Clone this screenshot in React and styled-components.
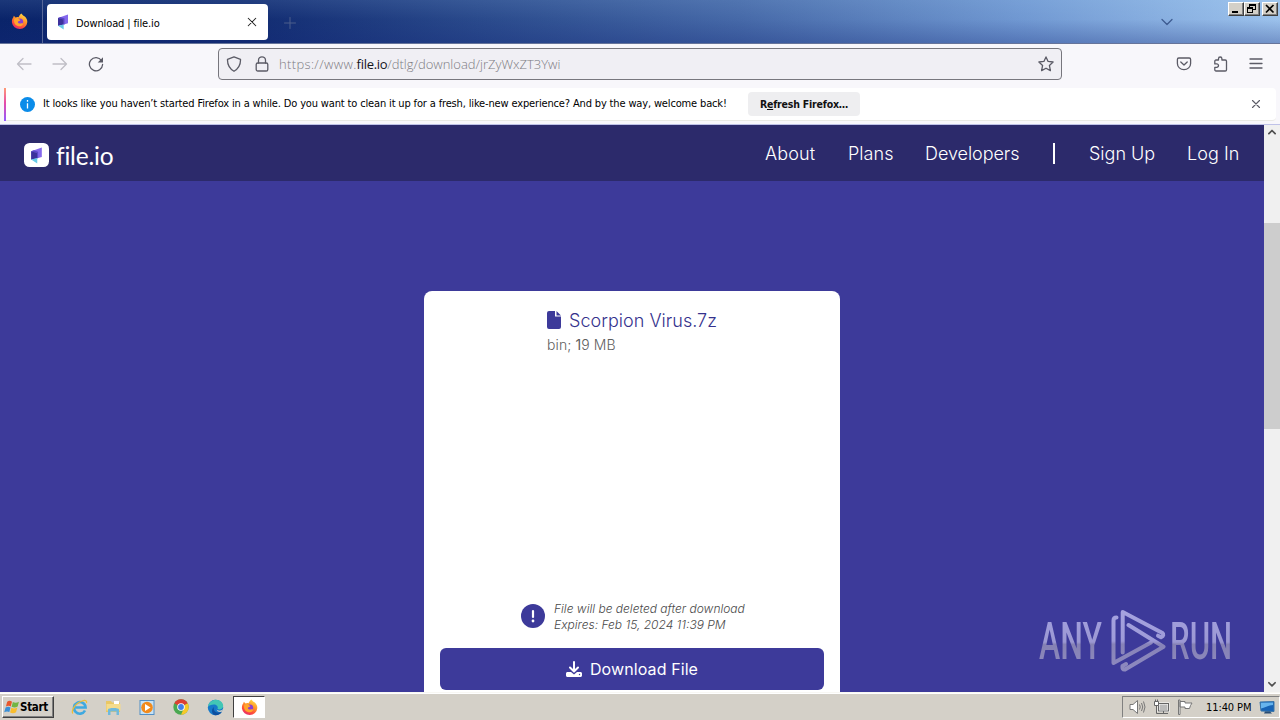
import React from "react";
import styled, { createGlobalStyle, css } from "styled-components";

const GlobalStyle = createGlobalStyle`
  * { box-sizing: border-box; }
  html, body { margin: 0; padding: 0; overflow: hidden; }
  button { font: inherit; color: inherit; border: 0; padding: 0; background: none; }
`;

const ui = css`font-family: "DejaVu Sans Condensed", "DejaVu Sans", sans-serif; font-stretch: condensed;`;

const Screen = styled.div`
  width: 1280px; height: 720px; display: flex; flex-direction: column;
  overflow: hidden; background: #f8f7fb; ${ui} font-size: 11px; color: #15141a;
`;

/* Title bar */
const TitleBar = styled.header`
  height: 44px; flex: none; display: flex; position: relative;
  background:
    linear-gradient(180deg, rgba(180,225,255,.1), rgba(60,90,160,0) 45%, rgba(20,40,120,.3) 100%),
    linear-gradient(90deg, #0a246a 0, #122c72 250px, #2a4a8c 480px, #4669a8 740px, #7098d2 1020px, #9cc2ec 1280px);
  border-bottom: 1px solid #66749a;
`;
const FirefoxView = styled.div`
  width: 43px; display: flex; align-items: center; justify-content: center;
  border-right: 1px solid #576798; padding-right: 3px;
`;
const Tab = styled.div`
  width: 221px; height: 36px; margin: 4px 0 0 4px; border-radius: 4px; background: #fff;
  display: flex; align-items: center; padding: 0 10px 0 9px;
`;
const TabTitle = styled.span`flex: 1; margin-left: 6px; padding-top: 2px; letter-spacing: ${p => p.$ls}px; color: #000; white-space: nowrap;`;
const NewTab = styled.button`margin: 2px 0 0 16px; display: flex; align-items: center;`;
const TabList = styled.button`margin: 0 105px 0 auto; display: flex; align-items: center;`;
const WindowButtons = styled.div`position: absolute; right: 2px; top: 2px; display: flex;`;
const WindowButton = styled.button`
  width: 16px; height: 14px; background: #d4d0c8; display: flex;
  margin-left: ${p => p.$gap || 0}px;
  border: 1px solid; border-color: #fff #404040 #404040 #fff; box-shadow: inset -1px -1px #808080;
`;

/* Navigation bar */
const NavBar = styled.div`
  height: 44px; flex: none; background: #f8f7fb; display: flex; align-items: center; padding: 0 16px 4px;
`;
const NavButtons = styled.div`display: flex; gap: 20px; width: 202px;`;
const UrlBar = styled.div`
  width: 844px; height: 32px; border: 1px solid #77767d; border-radius: 4px; background: #f0eff4;
  display: flex; align-items: center; padding: 0 7px; gap: 12px;
`;
const Url = styled.span`
  font: 300 13px "Open Sans", "Noto Sans", sans-serif; color: #7c7b82; flex: 1; margin-left: -3px;
  white-space: nowrap;
  b { font-weight: 400; color: #15141a; letter-spacing: -0.3px; }
`;
const UrlScheme = styled.span`letter-spacing: 0.35px;`;
const NavTools = styled.div`display: flex; gap: 20px; margin-left: auto;`;

/* Notification */
const Notice = styled.div`
  height: 33px; flex: none; margin: 0 4px 0 4px; background: #fff; border-radius: 0 4px 4px 0;
  border-bottom: 1px solid #e9e9e5; display: flex; align-items: center; padding-right: 13px;
`;
const NoticeAccent = styled.i`width: 2px; height: 33px; margin-right: 14px; background: linear-gradient(#ff9a75, #e64ba8 45%, #9059ff);`;
const NoticeText = styled.span`margin: 0 21px 2px 8px; width: 684px; color: #000; letter-spacing: ${p => p.$ls}px; white-space: nowrap;`;
const RefreshButton = styled.button`
  width: 112px; height: 24px; border-radius: 4px; background: #eeeef0; color: #111;
  font-weight: 700; font-size: 10.5px; letter-spacing: ${p => p.$ls}px; white-space: nowrap;
  span { text-decoration: underline; }
`;
const NoticeClose = styled.button`margin-left: auto; display: flex;`;

/* Web page */
const Viewport = styled.div`
  height: 568px; flex: none; margin-top: 3px; display: flex; border-top: 1px solid #bfc2e8;
`;
const Page = styled.main`
  width: 1264px; height: 567px; overflow: hidden; background: #3d3a9a; position: relative;
  display: flex; flex-direction: column; align-items: center;
  font-family: Inter, sans-serif; font-stretch: normal;
`;
const SiteHeader = styled.div`
  width: 100%; height: 56px; flex: none; background: #2c2a6b; display: flex; align-items: center;
  padding: 0 25px 0 24px; color: #fff;
`;
const Brand = styled.div`
  display: flex; align-items: center; gap: 7px; padding-top: 4px;
  font: 400 24.5px Lato, sans-serif; letter-spacing: ${p => p.$ls}px;
  span { height: 28px; line-height: 30px; }
`;
const SiteNav = styled.nav`margin-left: auto; display: flex; align-items: center; font-size: 18px; font-weight: 350;`;
const NavLink = styled.a`
  width: ${p => p.$w}px; margin-left: ${p => p.$gap || 0}px; letter-spacing: ${p => p.$ls}px; white-space: nowrap;
`;
const Separator = styled.i`width: 2px; height: 21px; background: #fff; margin-left: 34px;`;
const Card = styled.section`
  width: 416px; height: 440px; flex: none; margin-top: 110px; background: #fff; border-radius: 8px;
  padding: 16px 16px 0; display: flex; flex-direction: column;
`;
const FileInfo = styled.div`width: 172px; margin-left: 107px; height: 293px;`;
const FileName = styled.div`
  height: 27px; display: flex; align-items: center; gap: 8px; color: #35328d; font-size: 18px; font-weight: 350;
  letter-spacing: ${p => p.$ls}px; white-space: nowrap;
  svg { margin-bottom: 1px; }
`;
const FileMeta = styled.div`
  color: #5f5f5f; font-size: 14px; line-height: 22px; font-weight: 300; letter-spacing: ${p => p.$ls}px; white-space: nowrap;
  b { font-weight: 400; }
`;
const Expiry = styled.div`display: flex; align-items: center; gap: 8px; margin-left: 81px; height: 32px; margin-bottom: 16px;`;
const ExpiryText = styled.div`
  font-style: italic; font-size: 12px; line-height: 16px; color: #4a4a4a; font-weight: 300; white-space: nowrap;
  padding: 2px 0 0 1px;
`;
const Line = styled.p`margin: 0; letter-spacing: ${p => p.$ls}px;`;
const DownloadButton = styled.button`
  width: 384px; height: 42px; border-radius: 6px; background: #3d3a9a; color: #fff; font-size: 16px;
  display: flex; align-items: center; justify-content: center; gap: 8px; letter-spacing: ${p => p.$ls}px;
`;
const Watermark = styled.div`
  position: absolute; left: 1038px; top: 483px; width: 200px; height: 66px; display: flex; align-items: center;
`;
const WatermarkWord = styled.span`
  width: ${p => p.$w}px; height: 60px; margin-left: ${p => p.$gap || 0}px; padding-top: 1px; font: 500 52px/60px Roboto, sans-serif;
  i {
    display: inline-block; font-style: normal; transform: scaleX(${p => p.$scale}); transform-origin: 0 0;
    color: transparent; background: linear-gradient(#a09dda 20%, #9b98d2 50%, #8581b4 54%, #8b87bb 80%);
    background-clip: text; -webkit-background-clip: text;
  }
`;
const ScrollBar = styled.div`width: 16px; height: 567px; background: #f0f0f0; display: flex; flex-direction: column; justify-content: space-between;`;
const ScrollArrow = styled.div`height: 16px; display: flex; align-items: center; justify-content: center;`;
const ScrollTrack = styled.div`flex: 1; padding-top: 82px;`;
const ScrollThumb = styled.div`height: 206px; background: #cdcdcd;`;

/* Taskbar */
const TaskBar = styled.footer`
  height: 28px; flex: none; background: #d4d0c8; border-top: 1px solid #f8f7f3; display: flex; align-items: center;
  box-shadow: inset 0 1px #fff; padding: 1px 0 0 2px;
`;
const StartButton = styled.button`
  width: 52px; height: 22px; display: flex; align-items: center; padding-left: 1px; color: #000;
  border: 1px solid; border-color: #fff #404040 #404040 #fff; box-shadow: inset -1px -1px #808080;
  font: 700 11.5px "DejaVu Sans Condensed", "DejaVu Sans", sans-serif; font-stretch: condensed; letter-spacing: ${p => p.$ls}px;
`;
const Launchers = styled.div`display: flex; margin-left: 8px;`;
const Launcher = styled.div`
  width: ${p => (p.$active ? 32 : 34)}px; height: 22px; display: flex; align-items: center; justify-content: center;
  ${p => p.$active && css`background: #fff; border: 1px solid; border-color: #404040 #fff #fff #404040; margin-left: 1px;`}
`;
const Tray = styled.div`
  width: 158px; height: 22px; margin-left: auto; display: flex; align-items: center; padding-left: 6px;
  border: 1px solid; border-color: #808080 #fff #fff #808080; color: #000;
`;
const TrayIcons = styled.div`display: flex; gap: 7px; width: 77px;`;
const Clock = styled.span`width: 53px; letter-spacing: ${p => p.$ls}px; white-space: nowrap;`;

const Icon = ({ s = 16, w, h, vb = "0 0 16 16", children, c = "#5b5b66", sw = 1.3 }) => (
  <svg width={w || s} height={h || s} viewBox={vb} fill="none" stroke={c} strokeWidth={sw}
    strokeLinecap="round" strokeLinejoin="round">{children}</svg>
);

const Firefox = ({ id }) => (
  <svg width="17" height="17" viewBox="0 0 18 18">
    <defs>
      <linearGradient id={id} x1=".8" y1="0" x2=".3" y2="1">
        <stop offset="0" stopColor="#ffe34a" /><stop offset=".4" stopColor="#ff9a28" />
        <stop offset=".75" stopColor="#ff4b3b" /><stop offset="1" stopColor="#e32c70" />
      </linearGradient>
    </defs>
    <path fill={`url(#${id})`} d="M11 .5c1 1 1.2 1.8 2.8 2.8 2 1.4 3.5 3.5 3.5 6.3A8.2 8 0 0 1 1 10C.8 7.500 1.500 5.500 2.500 4.500L3 3l1.800 1.700C6 4 7 4 8 4.400 8.600 3 9.500 1.500 11 .5z" />
    <circle cx="9.300" cy="9.300" r="3.600" fill="#8a3fd1" />
    <path fill="#ffa52c" d="M3.500 6.200c2-1.500 4.500-1 5.500.8l1 .5c-.5 1.300-2 1-2.800 2 .5 1.700 2 2 3.300 1.500 1.500-.5 2.500.3 2.500.3-1 2.500-3.500 3.200-5.800 2.500C4 13 2.500 9.500 3.500 6.200z" />
  </svg>
);

const FileIoMark = ({ w, h }) => (
  <svg width={w} height={h} viewBox="0 0 12 16">
    <path fill="#8468ec" d="M1 4L11 .5v8.800L6 10.800 1 12z" />
    <path fill="#5a47c7" d="M6.500 5.600L1 4l2.500-.9 4 1.300v6l-1 .3z" />
    <path fill="#3c319c" d="M1 4l5.500 1.600v5L1 11.800z" />
    <path fill="#66c9e6" d="M1 11.700l5.700-1.300V15.500z" />
  </svg>
);

export default function App() {
  return (
    <Screen>
      <GlobalStyle />
      <TitleBar>
        <FirefoxView><Firefox id="ffview" /></FirefoxView>
        <Tab>
          <FileIoMark w={14} h={16} />
          <TabTitle $ls={-0.12}>Download | file.io</TabTitle>
          <Icon s={12} c="#222" sw={1.4}><path d="M3 3l10 10M13 3L3 13" /></Icon>
        </Tab>
        <NewTab><Icon s={12} vb="0 0 12 12" c="#4d5f8c" sw={1}><path d="M6 .5v11M.5 6h11" /></Icon></NewTab>
        <TabList><Icon c="#3e5c91"><path d="M3 5.500l5 5 5-5" /></Icon></TabList>
        <WindowButtons>
          <WindowButton><svg width="14" height="12"><path d="M3 8h6v2H3z" /></svg></WindowButton>
          <WindowButton><svg width="14" height="12" fill="none" stroke="#000" shapeRendering="crispEdges"><path d="M4.500 4V1.500h6v5H8M4 2h7M2.500 4.500h5v5h-5zM2 5h6" /></svg></WindowButton>
          <WindowButton $gap={2}><svg width="14" height="12" fill="none" stroke="#000" strokeWidth="1.700"><path d="M3 2l7.500 7.500M10.500 2L3 9.500" /></svg></WindowButton>
        </WindowButtons>
      </TitleBar>

      <NavBar>
        <NavButtons>
          <Icon c="#c0bfc6"><path d="M15 8H1.500M7 2.500L1.500 8 7 13.500" /></Icon>
          <Icon c="#c0bfc6"><path d="M1 8h13.500M9 2.500L14.500 8 9 13.500" /></Icon>
          <Icon><path d="M13.500 4.500A6.600 6.600 0 1 0 14.600 8.500" /><path fill="#5b5b66" stroke="none" d="M15 1.200v5.300H9.700z" /></Icon>
        </NavButtons>
        <UrlBar>
          <Icon><path d="M8 .8l6.500 2.500c.2 5-1.500 9-6.500 12C3 12.300 1.300 8.300 1.500 3.300z" /></Icon>
          <Icon><rect x="2.200" y="7" width="11.600" height="8" rx="1.600" /><path d="M4.500 7V4.300a3.500 3.500 0 0 1 7 0V7" /></Icon>
          <Url><UrlScheme>https://www.</UrlScheme><b>file.io</b>/dtlg/download/jrZyWxZT3Ywi</Url>
          <Icon><path d="M8 .9l2.100 4.500 5 .6-3.700 3.400 1 5.200L8 12.200l-4.400 2.400 1-5.200L.9 6l5-.6z" /></Icon>
        </UrlBar>
        <NavTools>
          <Icon><path d="M2.800 2h10.400c.8 0 1.400.6 1.400 1.400v4a6.600 6.300 0 0 1-13.200 0v-4C1.400 2.600 2 2 2.800 2zM4.800 6L8 9l3.200-3" /></Icon>
          <Icon><path d="M6.500 4V2.700a1.700 1.700 0 0 1 3.400 0V4h3.400c.7 0 1.200.5 1.200 1.200v8.600c0 .7-.5 1.200-1.200 1.200H4c-.7 0-1.200-.5-1.200-1.200v-2.500h2a1.700 1.700 0 0 0 0-3.400h-2V5.200C2.800 4.500 3.300 4 4 4z" /></Icon>
          <Icon><path d="M2 3h12M2 7.500h12M2 12h12" /></Icon>
        </NavTools>
      </NavBar>

      <Notice>
        <NoticeAccent />
        <svg width="15" height="15" viewBox="0 0 15 15">
          <circle cx="7.500" cy="7.500" r="7.500" fill="#0b8ce9" /><path d="M7.500 3v1.800M7.500 6.300v5.200" stroke="#fff" strokeWidth="1.300" />
        </svg>
        <NoticeText $ls={-0.15}>It looks like you haven’t started Firefox in a while. Do you want to clean it up for a fresh, like-new experience? And by the way, welcome back!</NoticeText>
        <RefreshButton $ls={-0.2}>R<span>e</span>fresh Firefox…</RefreshButton>
        <NoticeClose><Icon s={14}><path d="M4 4l8 8M12 4l-8 8" /></Icon></NoticeClose>
      </Notice>

      <Viewport>
        <Page>
          <SiteHeader>
            <Brand $ls={-0.2}>
              <svg width="25" height="24" viewBox="0 0 25 24">
                <rect width="25" height="24" rx="5.500" fill="#fff" />
                <g transform="translate(6 4)"><FileIoMark w={13} h={17} /></g>
              </svg>
              <span>file.io</span>
            </Brand>
            <SiteNav>
              <NavLink $w={51} $ls={0.1}>About</NavLink>
              <NavLink $w={45} $gap={32} $ls={0.05}>Plans</NavLink>
              <NavLink $w={94} $gap={32} $ls={-0.05}>Developers</NavLink>
              <Separator />
              <NavLink $w={66} $gap={34} $ls={0}>Sign Up</NavLink>
              <NavLink $w={52} $gap={32} $ls={0.05}>Log In</NavLink>
            </SiteNav>
          </SiteHeader>
          <Card>
            <FileInfo>
              <FileName $ls={0.03}>
                <svg width="14" height="18" viewBox="0 0 14 18"><path fill="#3d3a9a" d="M2 0h6v5.500h6V16a2 2 0 0 1-2 2H2a2 2 0 0 1-2-2V2a2 2 0 0 1 2-2zm7.500 0L14 4.400H9.500z" /></svg>
                Scorpion Virus.7z
              </FileName>
              <FileMeta $ls={0.1}>bin; <b>1</b>9 MB</FileMeta>
            </FileInfo>
            <Expiry>
              <svg width="24" height="24"><circle cx="12" cy="12" r="12" fill="#3d3a9a" /><path d="M12 7v6" stroke="#fff" strokeWidth="2.200" strokeLinecap="round" /><circle cx="12" cy="17" r="1.400" fill="#fff" /></svg>
              <ExpiryText>
                <Line $ls={0}>File will be deleted after download</Line>
                <Line $ls={0}>Expires: Feb 15, 2024 11:39 PM</Line>
              </ExpiryText>
            </Expiry>
            <DownloadButton $ls={0.1}>
              <svg width="16" height="16" viewBox="0 0 16 16" fill="none">
                <path d="M8 1v9M4 6.500l4 4 4-4" stroke="#fff" strokeWidth="2" strokeLinecap="round" strokeLinejoin="round" />
                <path fill="#fff" d="M1.500 11H5l3 2.500 3-2.500h3.500c.8 0 1.500.7 1.500 1.500v2c0 .8-.7 1.500-1.500 1.500h-13C.7 16 0 15.300 0 14.500v-2C0 11.700.7 11 1.500 11z" />
                <circle cx="13.500" cy="13.500" r=".7" fill="#3d3a9a" />
              </svg>
              Download File
            </DownloadButton>
          </Card>
          <Watermark>
            <WatermarkWord $w={71} $gap={1} $scale={0.615}><i>ANY</i></WatermarkWord>
            <svg width="56" height="64" viewBox="0 0 56 64" fill="none" strokeWidth="4" strokeLinejoin="round" strokeLinecap="round">
              <defs><linearGradient id="wm" gradientUnits="userSpaceOnUse" x1="0" y1="0" x2="0" y2="64">
                <stop offset="0" stopColor="#a6a3e0" /><stop offset=".5" stopColor="#9e9bd8" /><stop offset=".55" stopColor="#8783b8" /><stop offset="1" stopColor="#8e8ac0" />
              </linearGradient></defs>
              <g stroke="url(#wm)">
                <path d="M6.500 8.500Q3.500 8.500 3.500 11.500V54L41 33.500" />
                <path d="M12.700 43.500V3L52 23.700Q55 26 51 28.300L48 26.700" />
                <path d="M18.500 16L53.500 37.700L15 60.500Q12 61 12.500 57L16 55" />
              </g>
            </svg>
            <WatermarkWord $w={64} $gap={4} $scale={0.6}><i>RUN</i></WatermarkWord>
          </Watermark>
        </Page>
        <ScrollBar>
          <ScrollArrow><Icon s={10} c="#505050" sw={2.800}><path d="M3 9l5-5 5 5" /></Icon></ScrollArrow>
          <ScrollTrack><ScrollThumb /></ScrollTrack>
          <ScrollArrow><Icon s={10} c="#505050" sw={2.800}><path d="M3 6l5 5 5-5" /></Icon></ScrollArrow>
        </ScrollBar>
      </Viewport>

      <TaskBar>
        <StartButton $ls={-0.3}>
          <svg width="16" height="16" viewBox="0 0 15 15">
            <path fill="#e8572b" d="M3 2.500C5 1 6.500 2 7.500 2.500L6.300 7C5 6 3.500 6 1.800 7z" />
            <path fill="#72b544" d="M8.300 2.900c2 1 3.800.8 5.700-.4L12.800 7c-2 1.200-3.600 1.200-5.700.2z" />
            <path fill="#3a8fd6" d="M1.500 8c1.800-1 3.200-.8 4.600-.1L5 12.300c-1.500-.8-3-.8-4.800.2z" />
            <path fill="#f9bd2d" d="M6.900 8.200c2 .9 3.600.8 5.600-.3l-1.200 4.500c-2 1.200-3.500 1.200-5.600.2z" />
          </svg>
          Start
        </StartButton>
        <Launchers>
          <Launcher>
            <svg width="17" height="17" viewBox="0 0 17 17" fill="none">
              <path d="M14 11.500a5.800 5.800 0 1 1 .6-3H4.500" stroke="#3fa9e0" strokeWidth="2.600" />
              <path d="M2 14.500C-.5 13 4 4 11 2c4-1.300 5 0 4.500 2" stroke="#edbd36" strokeWidth="1.300" />
            </svg>
          </Launcher>
          <Launcher>
            <svg width="17" height="17" viewBox="0 0 17 17">
              <path fill="#e9c765" d="M1 2h5l1 1.500h8V13H1z" /><path fill="#fff" d="M9 2h5v3H9z" /><path fill="#f4db8c" d="M1.500 5h14v6.500h-14z" />
              <path fill="#6fb9dc" d="M3 10.500c0-2 11-2 11 0V16h-2.500v-3.500h-6V16H3z" />
            </svg>
          </Launcher>
          <Launcher>
            <svg width="17" height="17" viewBox="0 0 17 17">
              <rect x="1" y="1.500" width="14" height="14" fill="#c6e2f5" stroke="#528fc5" /><circle cx="8" cy="8.500" r="5.800" fill="#f28a1b" /><path fill="#fff" d="M6 5l5.500 3.500L6 12z" />
            </svg>
          </Launcher>
          <Launcher>
            <svg width="16" height="16" viewBox="0 0 16 16">
              <circle cx="8" cy="8" r="7.700" fill="#4aa851" /><path fill="#dc3f33" d="M8 8L1.300 4.200A7.700 7.700 0 0 1 14.700 4.200z" /><path fill="#f7c928" d="M8 8l6.700-3.800A7.700 7.700 0 0 1 8 15.700L11 9z" />
              <circle cx="8" cy="8" r="3.800" fill="#fff" /><circle cx="8" cy="8" r="2.900" fill="#4280e8" />
            </svg>
          </Launcher>
          <Launcher>
            <svg width="17" height="17" viewBox="0 0 17 17">
              <circle cx="8.500" cy="8.500" r="7.700" fill="#1679c9" />
              <path fill="#42c6b5" d="M1 7.500C2 3 5.500.8 9 .8c4.500 0 7.200 3.200 7.200 6.200 0 3-3.500 4-5.700 3 1-2-.5-4.500-3.500-4.500C4 5.500 2 6.500 1 7.500z" />
              <path fill="#0d4f9f" d="M7 8c-1 3 1 6 5 5.500 1.500 0 2.500-.5 3-1-1.500 3-4.500 4-7 3.700C4.500 15.500 4 10 7 8z" />
              <path fill="#d4d0c8" d="M9.500 10.500c1.500 1.500 4.500 1.700 6.700-.5l-1 2.500c-2 1-5 .5-5.700-2z" />
            </svg>
          </Launcher>
          <Launcher $active><Firefox id="fftask" /></Launcher>
        </Launchers>
        <Tray>
          <TrayIcons>
            <svg width="17" height="16" viewBox="0 0 17 16" fill="none" stroke="#777" strokeWidth="1">
              <path fill="#fff" d="M1 5.500h3L8.500 1.500v13L4 10.500H1z" /><path d="M10.500 5.500q1.500 2.500 0 5M12.500 4q2.500 4 0 8M14.500 2.500q3 5.500 0 11" />
            </svg>
            <svg width="17" height="16" viewBox="0 0 17 16" fill="none" stroke="#666">
              <rect x="5.500" y="4.500" width="10" height="7.500" fill="#bbb" stroke="#fff" strokeWidth="2" /><rect x="5.500" y="4.500" width="10" height="7.500" /><path d="M7 14.500h8M10.500 12v2.500M3.500 7v7.500H8" /><path fill="#fff" d="M1.500 2.500h4v4h-4zM2.500.5v2M4.500.5v2" />
            </svg>
            <svg width="17" height="16" viewBox="0 0 17 16" fill="#fff" stroke="#777">
              <path d="M1.500 1v14.500h1.500V1zM3 2.500h5v1.500h7l-1.500 2.500-1 3H8V8H3z" />
            </svg>
          </TrayIcons>
          <Clock $ls={-0.1}>11:40 PM</Clock>
          <svg width="17" height="15" viewBox="0 0 17 15">
            <path fill="#1763b5" stroke="#3c76a8" d="M1 2l14-.5v10L2 11z" /><path fill="#67b4ed" d="M2 2.800l12-.4v2.500C9 5 6 8 2 8.500z" /><path fill="#294d75" d="M6 11.500h5l2 2H5z" />
          </svg>
        </Tray>
      </TaskBar>
    </Screen>
  );
}
